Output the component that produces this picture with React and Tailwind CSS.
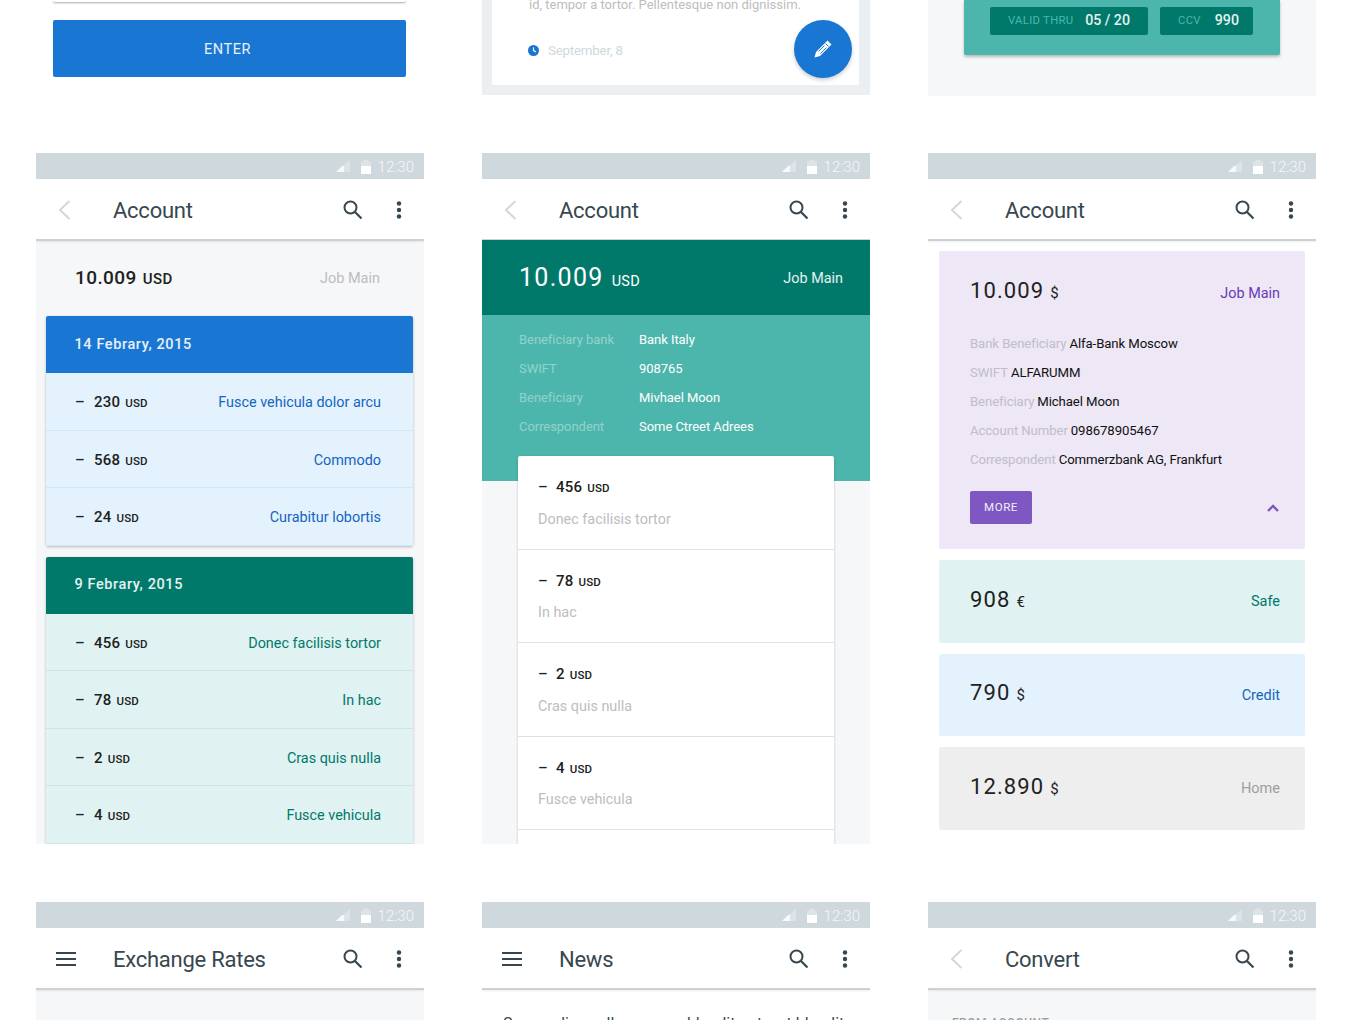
const Signal = () => (
  <svg width="14" height="12" viewBox="0 0 14 12"><path d="M14 0V12H0Z" fill="#ffffff" fillOpacity="0.3" /><path d="M8 6V12H0L6 6Z" fill="#ffffff" fillOpacity="0.8" /></svg>
);
const Battery = () => (
  <svg width="10" height="15" viewBox="0 0 10 15"><path d="M0 2.500H2.500V0.500H7.500V2.500H10V15H0Z" fill="#ffffff" fillOpacity="0.3" /><rect x="0" y="7" width="10" height="8" fill="#ffffff" /></svg>
);
const Search = () => (
  <svg width="20" height="20" viewBox="0 0 20 20" fill="none" stroke="#37474f" strokeWidth="2"><circle cx="7.500" cy="7.500" r="6" /><path d="M12 12L18.500 18.500" strokeWidth="2.200" /></svg>
);
const Dots = () => (
  <svg width="6" height="18" viewBox="0 0 6 18" fill="#37474f"><circle cx="3" cy="2.500" r="2.200" /><circle cx="3" cy="9" r="2.200" /><circle cx="3" cy="15.500" r="2.200" /></svg>
);
const Back = () => (
  <svg width="13" height="20" viewBox="0 0 13 20" fill="none" stroke="#cfd8dc" strokeWidth="2"><path d="M11.500 1L2 10L11.500 19" /></svg>
);
const Menu = () => (
  <svg width="20" height="14" viewBox="0 0 20 14" fill="#37474f"><rect y="0" width="20" height="2" /><rect y="6" width="20" height="2" /><rect y="12" width="20" height="2" /></svg>
);
const Pencil = () => (
  <svg width="20" height="20" viewBox="0 0 20 20" fill="#ffffff"><path d="M14.500 1.500L18.500 5.500L7 17L1.500 18.500L3 13Z" /><path d="M12.500 4.500L15.500 7.500" stroke="#1976d2" strokeWidth="1" /><path d="M11.500 6.500L5.500 12.500M13.500 8.500L7.500 14.500" stroke="#1976d2" strokeWidth="0.900" /></svg>
);
const Clock = () => (
  <svg width="11" height="11" viewBox="0 0 11 11"><circle cx="5.500" cy="5.500" r="5.500" fill="#1976d2" /><path d="M5.500 2.500V5.500L8 7" stroke="#ffffff" strokeWidth="1.200" fill="none" /></svg>
);
const Chevron = () => (
  <svg width="12" height="8" viewBox="0 0 12 8" fill="none" stroke="#7e57c2" strokeWidth="2.400"><path d="M1 7L6 2L11 7" /></svg>
);

const AppBar = ({ title, left }) => (
  <div className="shrink-0">
    <div className="h-[26px] bg-[#cfd8dc] flex items-center justify-end pr-[10px] gap-[11px]">
      <Signal />
      <div className="flex items-center gap-[7px]">
        <Battery />
        <span className="pt-[2px] text-[15px] text-white/80 font-light">12:30</span>
      </div>
    </div>
    <div className="h-[60px] bg-white flex items-center pl-[20px] pr-[22px] pt-[2px]">
      <div className="w-[57px] flex items-center">{left === "menu" ? <Menu /> : <div className="pl-[2px]"><Back /></div>}</div>
      <span className="flex-1 pt-[1px] text-[22px] text-[#37474f] leading-none tracking-[-0.25px]">{title}</span>
      <div className="mr-[33px] flex"><Search /></div>
      <Dots />
    </div>
    <div className="h-[2px] bg-[#cfd0d1] shadow-[0_1px_2px_rgba(0,0,0,0.08)]" />
  </div>
);

const Usd = ({ children }) => <span className="text-[11.500px] font-medium tracking-[0.2px] text-[#212121] ml-[5px]">{children}</span>;

const TxRow = ({ amount, label, labelClass, border }) => (
  <div className={`h-[57.500px] flex items-center justify-between pl-[29px] pr-[32px] pt-[2px] border-b ${border}`}>
    <div className="flex items-baseline text-[15px] font-medium text-[#212121] tracking-[0.2px]">
      <span className="w-[19px]">–</span>
      <span>{amount}</span>
      <Usd>USD</Usd>
    </div>
    <span className={`pt-[2px] text-[14.400px] ${labelClass}`}>{label}</span>
  </div>
);

const DateCard = ({ date, head, body, label, border, rows }) => (
  <div className="rounded-[2px] shadow-[0_1px_3px_rgba(0,0,0,0.25)] overflow-hidden">
    <div className={`h-[57px] flex items-center pl-[28.500px] text-[14.500px] font-medium tracking-[0.6px] text-white/90 ${head}`}>{date}</div>
    <div className={body}>
      {rows.map((r) => (
        <TxRow key={r[1]} amount={r[0]} label={r[1]} labelClass={label} border={border} />
      ))}
    </div>
  </div>
);

const AccountOne = () => (
  <div className="h-[691px] overflow-hidden flex flex-col bg-[#f5f7f8]">
    <AppBar title="Account" />
    <div className="h-[75px] shrink-0 flex items-center justify-between pl-[39px] pr-[44px]">
      <div className="flex items-baseline text-[19px] font-medium tracking-[0.4px] text-[#212121]">
        10.009<span className="text-[15px] tracking-[0.4px] ml-[6px]">USD</span>
      </div>
      <span className="text-[14.500px] text-[#bdbdbd]">Job Main</span>
    </div>
    <div className="pl-[10px] pr-[11px] flex flex-col gap-[11px]">
      <DateCard
        date="14 Febrary, 2015"
        head="bg-[#1976d2]"
        body="bg-[#e3f2fd]"
        label="text-[#1565c0]"
        border="border-[#d3e6f3]"
        rows={[["230", "Fusce vehicula dolor arcu"], ["568", "Commodo"], ["24", "Curabitur lobortis"]]}
      />
      <DateCard
        date="9 Febrary, 2015"
        head="bg-[#00796b]"
        body="bg-[#e0f2f1]"
        label="text-[#00796b]"
        border="border-[#c9e6e3]"
        rows={[["456", "Donec facilisis tortor"], ["78", "In hac"], ["2", "Cras quis nulla"], ["4", "Fusce vehicula"]]}
      />
    </div>
  </div>
);

const Detail = ({ k, v }) => (
  <div className="h-[29px] flex items-center text-[13px] tracking-[-0.05px]">
    <span className="w-[120px] text-white/40">{k}</span>
    <span className="text-white">{v}</span>
  </div>
);

const ListRow = ({ amount, label }) => (
  <div className="h-[93.500px] shrink-0 border-b border-[#e0e0e0] pl-[20px] pt-[20px]">
    <div className="flex items-baseline text-[15px] font-medium text-[#212121] tracking-[0.2px]">
      <span className="w-[18px]">–</span>
      <span>{amount}</span>
      <Usd>USD</Usd>
    </div>
    <div className="mt-[10px] text-[14.400px] text-[#bdbdbd]">{label}</div>
  </div>
);

const AccountTwo = () => (
  <div className="h-[691px] overflow-hidden flex flex-col bg-[#f5f7f8]">
    <AppBar title="Account" />
    <div className="h-[75px] shrink-0 -mt-[1px] bg-[#00796b] flex items-center justify-between pl-[37px] pr-[27px]">
      <div className="flex items-baseline text-white text-[25px] tracking-[1.300px]">
        10.009<span className="text-[14.500px] tracking-[0.3px] ml-[8px]">USD</span>
      </div>
      <span className="pt-[2px] text-[14.400px] text-white/90">Job Main</span>
    </div>
    <div className="h-[166px] shrink-0 bg-[#4db6ac] pl-[37px] pt-[10px]">
      <Detail k="Beneficiary bank" v="Bank Italy" />
      <Detail k="SWIFT" v="908765" />
      <Detail k="Beneficiary" v="Mivhael Moon" />
      <Detail k="Correspondent" v="Some Ctreet Adrees" />
    </div>
    <div className="mx-[36px] -mt-[25px] bg-white rounded-t-[2px] shadow-[0_1px_3px_rgba(0,0,0,0.2)] flex flex-col">
      <ListRow amount="456" label="Donec facilisis tortor" />
      <ListRow amount="78" label="In hac" />
      <ListRow amount="2" label="Cras quis nulla" />
      <ListRow amount="4" label="Fusce vehicula" />
      <div className="h-[40px]" />
    </div>
  </div>
);

const Bank = ({ k, v }) => (
  <div className="h-[29px] flex items-center text-[13.200px] tracking-[-0.1px]">
    <span className="text-[#c2bdc9] mr-[3px]">{k}</span>
    <span className="text-[#111111]">{v}</span>
  </div>
);

const Amount = ({ value, unit }) => (
  <div className="flex items-baseline text-[22px] tracking-[1.100px] text-[#212121]">
    {value}<span className="text-[15px] ml-[6px] tracking-normal">{unit}</span>
  </div>
);

const Balance = ({ value, unit, label, bg, color }) => (
  <div className={`h-[82.500px] rounded-[2px] flex items-center justify-between pl-[31px] pr-[25px] ${bg}`}>
    <div className="-mt-[4px]"><Amount value={value} unit={unit} /></div>
    <span className={`pt-[2px] text-[14.500px] ${color}`}>{label}</span>
  </div>
);

const AccountThree = () => (
  <div className="h-[691px] overflow-hidden flex flex-col bg-white">
    <AppBar title="Account" />
    <div className="px-[11px] pt-[10px] flex flex-col gap-[11px]">
      <div className="h-[298px] bg-[#ede7f6] rounded-[2px] pl-[31px] pr-[25px] pt-[23px]">
        <div className="flex items-center justify-between">
          <Amount value="10.009" unit="$" />
          <span className="pt-[6px] text-[14.400px] text-[#673ab7]">Job Main</span>
        </div>
        <div className="mt-[22px]">
          <Bank k="Bank Beneficiary" v="Alfa-Bank Moscow" />
          <Bank k="SWIFT" v="ALFARUMM" />
          <Bank k="Beneficiary" v="Michael Moon" />
          <Bank k="Account Number" v="098678905467" />
          <Bank k="Correspondent" v="Commerzbank AG, Frankfurt" />
        </div>
        <div className="mt-[17px] flex items-center justify-between pr-[1px]">
          <div className="w-[62px] h-[33px] rounded-[2px] bg-[#7e57c2] flex items-center justify-center text-[11.500px] tracking-[0.6px] text-white/90">MORE</div>
          <Chevron />
        </div>
      </div>
      <Balance value="908" unit="€" label="Safe" bg="bg-[#e0f2f1]" color="text-[#00796b]" />
      <Balance value="790" unit="$" label="Credit" bg="bg-[#e3f2fd]" color="text-[#1565c0]" />
      <Balance value="12.890" unit="$" label="Home" bg="bg-[#eeeeee]" color="text-[#9e9e9e]" />
    </div>
  </div>
);

export default function App() {
  return (
    <div className="h-[1020px] overflow-hidden bg-white px-[36px] font-['Roboto',sans-serif] grid grid-cols-[388px_388px_388px] gap-x-[58px] grid-rows-[95px_691px_118px] gap-y-[58px]">
      <div className="flex flex-col pl-[17px] pr-[18px]">
        <div className="h-[2px] bg-white shadow-[0_1px_2px_rgba(0,0,0,0.35)] rounded-b-[2px]" />
        <div className="mt-[18px] h-[57px] bg-[#1976d2] rounded-[2px] flex items-center justify-center pr-[4px] pt-[2px] text-[14.500px] tracking-[0.6px] text-white/90">ENTER</div>
      </div>

      <div className="bg-[#eceff1] pl-[10px] pr-[11px] pb-[10px] h-[95px]">
        <div className="h-full bg-white rounded-b-[2px] pl-[37px] pr-[7px] flex justify-between">
          <div className="flex-1 min-w-0">
            <div className="text-[13px] leading-none -mt-[2px] text-[#bdbdbd] whitespace-nowrap">id, tempor a tortor. Pellentesque non dignissim.</div>
            <div className="mt-[30px] -ml-[1px] flex items-center gap-[9px] text-[13.300px] text-[#cfd8dc] tracking-[-0.2px]"><Clock />September, 8</div>
          </div>
          <div className="w-[58px] h-[58px] shrink-0 mt-[20px] rounded-full bg-[#1976d2] shadow-[0_2px_4px_rgba(0,0,0,0.2)] flex items-center justify-center"><Pencil /></div>
        </div>
      </div>

      <div className="bg-[#f5f7f8] px-[36px] h-[96px]">
        <div className="h-[55px] bg-[#4db6ac] rounded-b-[2px] shadow-[0_2px_3px_rgba(0,0,0,0.25)] pl-[26px] flex gap-[12px] pt-[7px]">
          <div className="h-[28px] w-[158px] bg-[#00796b] rounded-[2px] flex items-center justify-between pl-[18px] pr-[18px]">
            <span className="text-[11.300px] tracking-[0.3px] text-[#4db6ac]">VALID THRU</span>
            <span className="text-[14.200px] font-medium text-white/90">05 / 20</span>
          </div>
          <div className="h-[28px] w-[93px] bg-[#00796b] rounded-[2px] flex items-center justify-between pl-[18px] pr-[14px]">
            <span className="text-[11.300px] tracking-[0.3px] text-[#4db6ac]">CCV</span>
            <span className="text-[14.200px] font-medium text-white/90">990</span>
          </div>
        </div>
      </div>

      <AccountOne />
      <AccountTwo />
      <AccountThree />

      <div className="bg-[#f5f7f8] h-[118px]"><AppBar title="Exchange Rates" left="menu" /></div>
      <div className="bg-white h-[118px]">
        <AppBar title="News" left="menu" />
        <div className="pl-[21px] pt-[22px] text-[16px] text-[#37474f] whitespace-nowrap">Suspendisse ullamcorper blandit ante, at blandit</div>
      </div>
      <div className="bg-[#f5f7f8] h-[118px]">
        <AppBar title="Convert" />
        <div className="pl-[24px] pt-[24px] text-[12px] font-medium tracking-[0.5px] text-[#9e9e9e] whitespace-nowrap">FROM ACCOUNT</div>
      </div>
    </div>
  );
}
